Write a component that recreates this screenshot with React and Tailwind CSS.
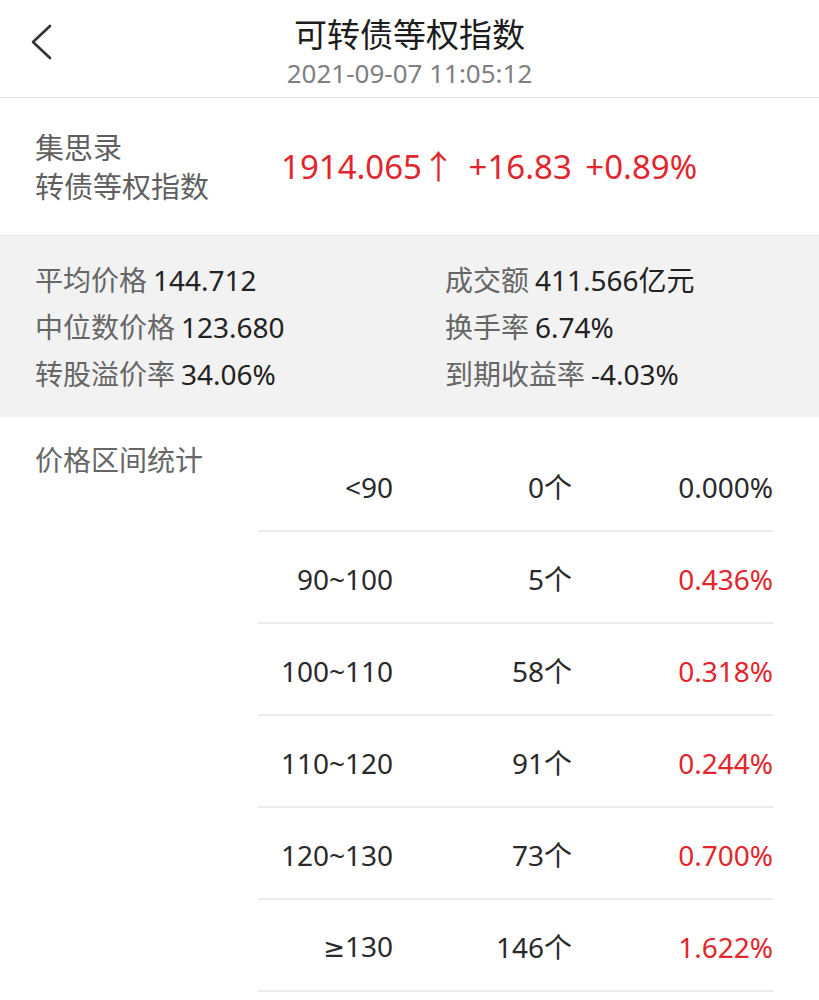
import React from "react";

const FONT = { fontFamily: '"Noto Sans", "Noto Sans CJK SC", sans-serif' };

const rows = [
  { range: "<90", count: "0个", pct: "0.000%", red: false },
  { range: "90~100", count: "5个", pct: "0.436%", red: true },
  { range: "100~110", count: "58个", pct: "0.318%", red: true },
  { range: "110~120", count: "91个", pct: "0.244%", red: true },
  { range: "120~130", count: "73个", pct: "0.700%", red: true },
  { range: "≥130", count: "146个", pct: "1.622%", red: true },
];

function Range({ text }) {
  if (text.startsWith("≥")) {
    return (
      <div>
        <span className="font-['DejaVu_Sans',sans-serif] text-[26px]">≥</span>
        {text.slice(1)}
      </div>
    );
  }
  return <div>{text}</div>;
}

function Stat({ label, value }) {
  return (
    <div className="h-[47px] flex items-center whitespace-nowrap">
      <span className="text-[#666666]">{label}</span>
      <span className="ml-[6px] text-[#222222]">{value}</span>
    </div>
  );
}

export default function App() {
  return (
    <div className="w-[819px] h-[1000px] bg-white overflow-hidden" style={FONT}>
      {/* Header */}
      <div className="relative h-[98px] border-b border-[#e3e3e3] flex flex-col items-center">
        <svg className="absolute left-[28px] top-[22px]" width="28" height="40" viewBox="0 0 28 40">
          <path d="M22 4 L5 20 L22 36" fill="none" stroke="#333333" strokeWidth="2.6" strokeLinecap="round" strokeLinejoin="round" />
        </svg>
        <div className="mt-[15px] text-[33px] leading-[40px] text-[#1c1c1c]">可转债等权指数</div>
        <div className="mt-[3px] text-[26px] leading-[30px] text-[#808080]">2021-09-07 11:05:12</div>
      </div>

      {/* Index */}
      <div className="h-[137px] flex items-center pl-[35px]">
        <div className="w-[246px] text-[29px] leading-[39px] text-[#5f5f5f]">
          <div>集思录</div>
          <div>转债等权指数</div>
        </div>
        <div className="text-[33px] leading-[40px] text-[#e1262d] whitespace-nowrap [word-spacing:5px]">
          1914.065↑ +16.83 +0.89%
        </div>
      </div>

      {/* Stats */}
      <div className="h-[182px] bg-[#f2f2f2] border-t border-[#e8e8e8] pt-[20px] pl-[35px] flex text-[28px]">
        <div className="w-[410px]">
          <Stat label="平均价格" value="144.712" />
          <Stat label="中位数价格" value="123.680" />
          <Stat label="转股溢价率" value="34.06%" />
        </div>
        <div>
          <Stat label="成交额" value="411.566亿元" />
          <Stat label="换手率" value="6.74%" />
          <Stat label="到期收益率" value="-4.03%" />
        </div>
      </div>

      {/* Distribution */}
      <div className="flex pt-[23px] pl-[35px] text-[28px]">
        <div className="w-[223px] leading-[40px] text-[#666666]">价格区间统计</div>
        <div className="w-[515px]">
          {rows.map((r) => (
            <div
              key={r.range}
              className="h-[92px] pt-[3px] grid grid-cols-[135px_179px_201px] items-center border-b-2 border-[#ebebeb] text-right text-[#2a2a2a]"
            >
              <Range text={r.range} />
              <div>{r.count}</div>
              <div className={r.red ? "text-[#e1262d]" : "text-[#2a2a2a]"}>{r.pct}</div>
            </div>
          ))}
        </div>
      </div>
    </div>
  );
}
